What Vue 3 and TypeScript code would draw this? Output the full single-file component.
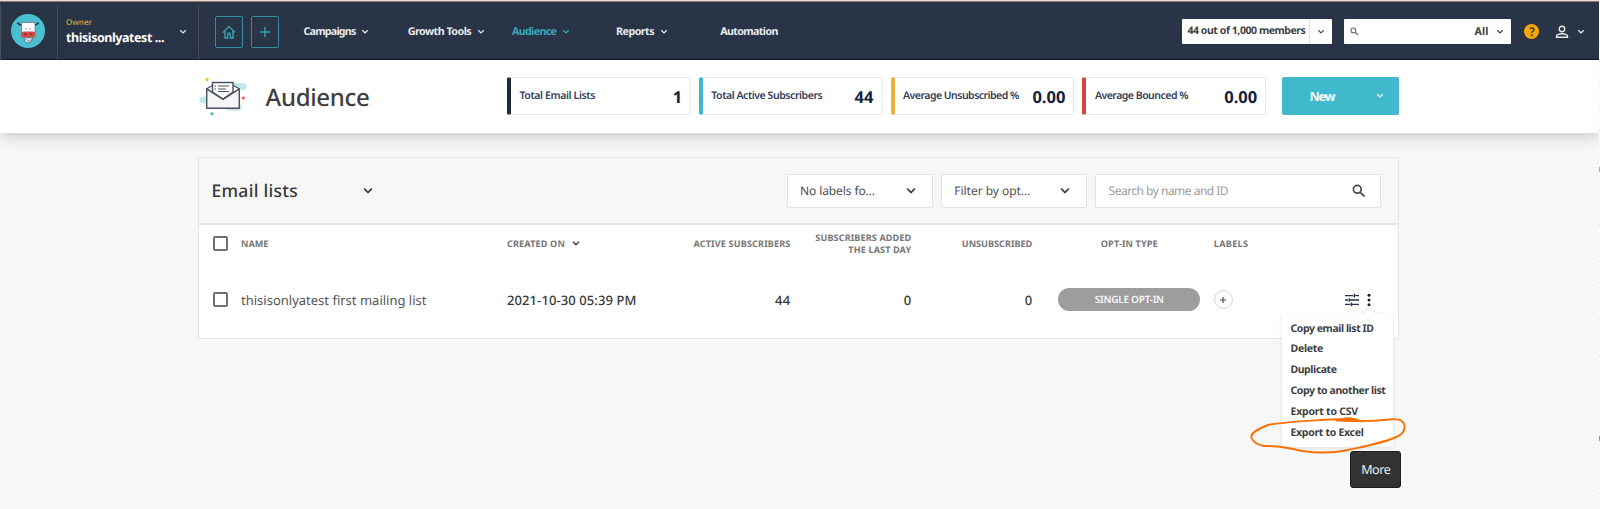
<script setup lang="ts">
import type { Directive } from 'vue'

// Tracks the text so that it fills the given width in pixels.
const vFit: Directive<HTMLElement, number> = {
  mounted(el, binding) {
    const natural = el.getBoundingClientRect().width
    const count = (el.textContent ?? '').trim().length
    el.style.letterSpacing = `${(binding.value - natural) / count}px`
  },
}

interface NavItem { label: string; width: number; active?: boolean; menu: boolean }
const nav: NavItem[] = [
  { label: 'Campaigns', width: 52, menu: true },
  { label: 'Growth Tools', width: 63.5, menu: true },
  { label: 'Audience', width: 44.5, menu: true, active: true },
  { label: 'Reports', width: 38, menu: true },
  { label: 'Automation', width: 57.5, menu: false },
]

const stats = [
  { label: 'Total Email Lists', width: 75.5, value: '1', valueWidth: 9, tone: 'navy' },
  { label: 'Total Active Subscribers', width: 111, value: '44', valueWidth: 19, tone: 'teal' },
  { label: 'Average Unsubscribed %', width: 115.5, value: '0.00', valueWidth: 33, tone: 'amber' },
  { label: 'Average Bounced %', width: 93, value: '0.00', valueWidth: 33, tone: 'red' },
]

const actions = [
  { label: 'Copy email list ID', width: 83 },
  { label: 'Delete', width: 32.5 },
  { label: 'Duplicate', width: 46 },
  { label: 'Copy to another list', width: 95 },
  { label: 'Export to CSV', width: 67.5 },
  { label: 'Export to Excel', width: 73 },
]

const ticks = [
  { y: 43, tone: 'grey' }, { y: 82, tone: 'grey' }, { y: 106, tone: 'grey' }, { y: 130, tone: 'grey' },
  { y: 167, tone: 'dark' }, { y: 224, tone: 'grey' }, { y: 261, tone: 'grey' }, { y: 282, tone: 'grey' },
  { y: 318, tone: 'grey' }, { y: 355, tone: 'grey' }, { y: 436, tone: 'blue' }, { y: 493, tone: 'grey' },
]
</script>

<template>
  <div class="page">
    <header class="topbar">
      <div class="brand">
        <svg width="36" height="36" viewBox="0 0 36 36">
          <circle cx="18" cy="18" r="17" fill="#4bbfd0" />
          <path d="M7.500 9.500c1 2.200 2.500 2.600 5 2.500M28.500 9.500c-1 2.200-2.500 2.600-5 2.500" fill="none" stroke="#293446" stroke-width="1.800" />
          <path d="M11.500 9.500h13.500v10h-13.500z" fill="#fff" stroke="#46566b" stroke-width=".6" />
          <path d="M15.500 15.800h1.700M19.300 15.800h1.700" stroke="#888" stroke-width="1" />
          <rect x="11" y="18.500" width="14.500" height="6" rx="2.800" fill="#d8493f" />
          <path d="M14 21.200h2.500M20 21.200h2.500" stroke="#8e2f35" stroke-width="1.400" />
          <path d="M14 24.700h9l-2 4-3 1.300-3-1.500z" fill="#dde8ef" stroke="#4d6072" stroke-width=".7" />
          <path d="M15.500 26l3 2 3-1.500" fill="none" stroke="#66798a" stroke-width=".7" />
        </svg>
      </div>
      <div class="account">
        <div class="account-text">
          <span v-fit="26" class="role">Owner</span>
          <span v-fit="98" class="account-name">thisisonlyatest ...</span>
        </div>
        <svg class="chev" width="8" height="6" viewBox="0 0 8 6"><path d="M1.300 1.300L4 3.900 6.700 1.300" /></svg>
      </div>
      <div class="quick">
        <div class="quick-btn">
          <svg width="14" height="14" viewBox="0 0 14 14"><path d="M1 7.500L7 1.500 13 7.500M3 6v7h2.700V9.500q0-1.500 1.300-1.500t1.300 1.500V13H11V6" /></svg>
        </div>
        <div class="quick-btn">
          <svg width="12" height="12" viewBox="0 0 12 12"><path d="M6 .7v10.600M.7 6h10.600" /></svg>
        </div>
      </div>
      <nav class="menu">
        <div v-for="item in nav" :key="item.label" class="menu-item" :class="{ active: item.active }">
          <span v-fit="item.width">{{ item.label }}</span>
          <svg v-if="item.menu" class="chev" width="8" height="6" viewBox="0 0 8 6"><path d="M1.300 1.300L4 3.900 6.700 1.300" /></svg>
        </div>
      </nav>
      <div class="members">
        <div class="members-label"><span v-fit="118">44 out of 1,000 members</span></div>
        <div class="members-toggle">
          <svg class="chev" width="8" height="6" viewBox="0 0 8 6"><path d="M1.300 1.300L4 3.900 6.700 1.300" /></svg>
        </div>
      </div>
      <div class="global-search">
        <svg class="lens" width="9" height="9" viewBox="0 0 9 9"><circle cx="3.400" cy="3.400" r="2.400" /><path d="M5.200 5.200L8 8" /></svg>
        <span v-fit="14" class="scope">All</span>
        <svg class="chev" width="8" height="6" viewBox="0 0 8 6"><path d="M1.300 1.300L4 3.900 6.700 1.300" /></svg>
      </div>
      <div class="help">?</div>
      <svg class="user" width="14" height="14" viewBox="0 0 14 14"><circle cx="7" cy="4" r="2.700" /><path d="M1.500 12.300v-1.400c0-1.200 3-2.200 5.500-2.200s5.500 1 5.500 2.200v1.400z" /></svg>
      <svg class="chev user-chev" width="8" height="6" viewBox="0 0 8 6"><path d="M1.300 1.300L4 3.900 6.700 1.300" /></svg>
    </header>

    <section class="hero">
      <svg class="hero-icon" width="50" height="40" viewBox="0 0 50 40">
        <path d="M34 9.500H45M5 23H12M31 30H40" stroke="#bfe8e8" stroke-width="7" stroke-linecap="round" />
        <path d="M8.500 12l5-3.500h22l6 3.500v19.500h-33z" fill="#f5f5f6" />
        <path d="M14.500 15V5.500H35V15L25 22z" fill="#fff" stroke="#4a5062" stroke-width="1.400" />
        <path d="M8.700 11.800L25 22.300 41.300 11.800V31.300H8.700z" fill="#f5f5f6" stroke="#4a5062" stroke-width="1.400" stroke-linejoin="round" />
        <path d="M8.700 11.800l5.500-3.300M41.300 11.800l-6-3.300" stroke="#4a5062" stroke-width="1.200" />
        <path d="M16.500 9h1.500M20 9h11M16.500 12h1.500M20 12h8M20 14.500h11" stroke="#4a5062" stroke-width="1.100" />
        <circle cx="9" cy="2.500" r="1.600" fill="#fdbb12" />
        <circle cx="45.300" cy="21" r="1.500" fill="#f4534b" />
        <circle cx="14" cy="36.800" r="1.600" fill="#3fb8cc" />
      </svg>
      <h1><span v-fit="104">Audience</span></h1>
      <div class="stats">
        <div v-for="s in stats" :key="s.label" class="stat" :class="s.tone">
          <span v-fit="s.width" class="stat-label">{{ s.label }}</span>
          <span v-fit="s.valueWidth" class="stat-value">{{ s.value }}</span>
        </div>
      </div>
      <div class="new-btn">
        <span v-fit="25">New</span>
        <svg class="chev" width="8" height="6" viewBox="0 0 8 6"><path d="M1.300 1.300L4 3.900 6.700 1.300" /></svg>
      </div>
    </section>

    <main class="panel">
      <div class="panel-head">
        <h2><span v-fit="86.500">Email lists</span></h2>
        <svg class="chev-lg" width="10" height="8" viewBox="0 0 10 8"><path d="M1.200 1.700L5 5.500 8.800 1.700" /></svg>
        <div class="select first">
          <span v-fit="75">No labels fo…</span>
          <svg class="chev-lg" width="10" height="8" viewBox="0 0 10 8"><path d="M1.200 1.700L5 5.500 8.800 1.700" /></svg>
        </div>
        <div class="select">
          <span v-fit="76">Filter by opt…</span>
          <svg class="chev-lg" width="10" height="8" viewBox="0 0 10 8"><path d="M1.200 1.700L5 5.500 8.800 1.700" /></svg>
        </div>
        <div class="search">
          <span v-fit="119.500">Search by name and ID</span>
          <svg width="14" height="14" viewBox="0 0 14 14"><circle cx="5.300" cy="5.300" r="3.900" /><path d="M8.300 8.300L12.700 12.700" /></svg>
        </div>
      </div>

      <div class="row head">
        <span class="box" />
        <div><span v-fit="27.500">NAME</span></div>
        <div class="created">
          <span v-fit="58">CREATED ON</span>
          <svg class="chev-lg" width="8" height="7" viewBox="0 0 10 8"><path d="M1.200 1.700L5 5.500 8.800 1.700" /></svg>
        </div>
        <div class="num"><span v-fit="97">ACTIVE SUBSCRIBERS</span></div>
        <div class="num two"><span v-fit="96">SUBSCRIBERS ADDED</span><span v-fit="63">THE LAST DAY</span></div>
        <div class="num"><span v-fit="70.500">UNSUBSCRIBED</span></div>
        <div class="mid"><span v-fit="57">OPT-IN TYPE</span></div>
        <div class="tag"><span v-fit="34.500">LABELS</span></div>
        <div />
      </div>

      <div class="row item">
        <span class="box" />
        <div class="list-name"><span v-fit="185.500">thisisonlyatest first mailing list</span></div>
        <div><span v-fit="129.500">2021-10-30 05:39 PM</span></div>
        <div class="num"><span v-fit="15.500">44</span></div>
        <div class="num"><span v-fit="7.500">0</span></div>
        <div class="num"><span v-fit="7.500">0</span></div>
        <div class="mid"><div class="pill"><span v-fit="69">SINGLE OPT-IN</span></div></div>
        <div class="tag">
          <div class="add"><svg width="6" height="6" viewBox="0 0 6 6"><path d="M3 0v6M0 3h6" /></svg></div>
        </div>
        <div class="tools">
          <svg width="14" height="14" viewBox="0 0 14 14">
            <path d="M0 2.600h8M10 2.600h4M9.300 .8v3.600M0 7h3M4.300 5.200v3.600M5 7h9M0 11.400h5.500M6.500 9.600v3.600M7 11.400h7" stroke="#293446" stroke-width="1.400" />
          </svg>
          <div class="kebab">
            <svg width="4" height="14" viewBox="0 0 4 14" fill="#101c30"><circle cx="2" cy="2.300" r="1.500" /><circle cx="2" cy="7" r="1.500" /><circle cx="2" cy="11.700" r="1.500" /></svg>
            <div class="dropdown">
              <div v-for="a in actions" :key="a.label" class="action"><span v-fit="a.width">{{ a.label }}</span></div>
            </div>
            <div class="tooltip"><span v-fit="29">More</span></div>
            <svg class="scribble" width="164" height="46" viewBox="1246 412 164 46">
              <path d="M1363 421.500C1348 418 1338 419 1322 420C1304 421 1284 422 1268 425C1258 429 1250 433 1251.500 438C1253 442 1257 444.500 1264 446C1278 445.500 1290 448 1302 451C1316 453 1334 453 1348 450C1366 446 1382 443 1394 438C1402 435 1406 430 1404 424C1402 419 1396 419 1389 419.500C1376 421 1362 422 1338 420.500C1344 417 1352 418 1358 420" />
            </svg>
          </div>
        </div>
      </div>
    </main>

    <aside class="edge">
      <i v-for="t in ticks" :key="t.y" :class="t.tone" :style="{ top: t.y + 'px' }" />
    </aside>
  </div>
</template>

<style>
html, body { margin: 0; background: #f7f7f7; }
</style>

<style scoped>
* { box-sizing: border-box; }
.page {
  position: relative;
  width: 1600px;
  height: 509px;
  overflow: hidden;
  background: #f7f7f7;
  font-family: "Noto Sans", "Open Sans", sans-serif;
  font-size: 11px;
  color: #424242;
  text-rendering: geometricPrecision;
}
svg { display: block; flex: none; }
span { white-space: nowrap; }
.chev path, .chev-lg path { fill: none; stroke: currentColor; stroke-width: 1.3; }
.chev-lg path { stroke-width: 1.7; }

.topbar {
  width: 1599px;
  height: 60px;
  display: flex;
  align-items: center;
  padding-top: 3px;
  background: #293446;
  border-top: 1px solid #eed9ce;
  border-bottom: 1px solid #0d1d3b;
  color: #e9ebee;
  box-shadow: inset 0 1px #8a7775;
}
.brand {
  width: 58px;
  height: 56px;
  padding: 9px 0 0 9px;
  border-left: 1px solid #454d5b;
  border-right: 1px solid #424750;
}
.account {
  width: 141px;
  height: 56px;
  display: flex;
  align-items: center;
  padding-left: 8px;
  border-right: 1px solid #424750;
}
.account-text { width: 113px; display: flex; flex-direction: column; align-items: flex-start; }
.role { font-size: 8px; line-height: 11px; font-weight: 600; color: #c69a3e; }
.account-name { font-size: 12.5px; line-height: 19px; font-weight: 700; color: #fff; }
.quick { display: flex; gap: 8px; margin-left: 16px; }
.quick-btn {
  width: 28px;
  height: 32px;
  display: flex;
  align-items: center;
  justify-content: center;
  border: 1px solid #318d9d;
  border-radius: 2px;
}
.quick-btn path { fill: none; stroke: #36a3b5; stroke-width: 1.4; }
.menu { display: grid; grid-template-columns: repeat(5, 104.2px); margin-left: 24.500px; }
.menu-item { display: flex; align-items: center; gap: 5.500px; font-size: 10.7px; font-weight: 700; }
.active { color: #38a9ba; }
.members {
  width: 150px;
  height: 25px;
  display: flex;
  margin-left: 357.500px;
  background: #fff;
  border-radius: 1px;
  color: #424242;
  font-size: 10.5px;
  font-weight: 700;
}
.members-label { width: 128px; padding-left: 5.500px; line-height: 25px; border-right: 1px solid #e2e2e2; }
.members-toggle { flex: 1; display: flex; align-items: center; justify-content: center; color: #555; }
.global-search {
  width: 167px;
  height: 25px;
  display: flex;
  align-items: center;
  margin-left: 12px;
  padding: 0 6.500px 0 6px;
  background: #fff;
  border-radius: 1px;
  color: #424242;
}
.lens { fill: none; stroke: #666; stroke-width: 1.1; }
.scope { margin-left: auto; margin-right: 8px; font-size: 10.7px; font-weight: 700; }
.help {
  width: 15px;
  height: 15px;
  margin-left: 13.5px;
  border-radius: 50%;
  background: #fca503;
  color: #293446;
  font-size: 12px;
  line-height: 15px;
  font-weight: 600;
  text-align: center;
}
.user { margin-left: 15.500px; fill: none; stroke: #e9ebee; stroke-width: 1.4; }
.user-chev { margin-left: 8px; }

.hero {
  width: 1599px;
  height: 72.500px;
  display: flex;
  align-items: center;
  padding-left: 198px;
  background: #fff;
  box-shadow: 0 2px 16px rgba(0, 0, 0, .22);
}
.hero-icon { margin-top: 2px; }
h1 { width: 259px; margin: 3px 0 0; padding-left: 17.500px; font-size: 24px; line-height: 30px; font-weight: 500; color: #3f3f3f; }
.stats { display: flex; gap: 8px; }
.stat {
  width: 183.8px;
  height: 38px;
  display: flex;
  align-items: center;
  justify-content: space-between;
  padding: 0 8px 0 8.5px;
  border: 1px solid #e8e8e8;
  border-left: 4px solid;
  border-radius: 2px;
  color: #33405a;
}
.stat-label { font-size: 10.5px; font-weight: 600; }
.stat-value { font-size: 16.5px; font-weight: 700; color: #14213c; }
.navy { border-left-color: #1d2942; }
.teal { border-left-color: #3fb8ca; }
.amber { border-left-color: #ecb13a; }
.red { border-left-color: #d6433c; }
.new-btn {
  width: 117px;
  height: 38px;
  display: flex;
  align-items: center;
  justify-content: space-between;
  margin-left: 15.800px;
  padding: 0 15px 0 27.500px;
  background: #40b9cc;
  border-radius: 2px;
  color: #fff;
  font-size: 12.500px;
  font-weight: 700;
}

.panel {
  width: 1201px;
  height: 181.500px;
  margin: 24.500px 0 0 198px;
  background: #fff;
  border: 1px solid #e6e6e6;
}
.panel-head {
  height: 67px;
  display: flex;
  align-items: center;
  padding-left: 12.500px;
  background: #f7f7f7;
  border-bottom: 2px solid #e4e4e4;
}
h2 { width: 151px; margin: 1px 0 0; font-size: 17.500px; line-height: 24px; font-weight: 500; color: #383838; }
.panel-head .chev-lg { color: #3b3b3b; }
.select {
  width: 146px;
  height: 34px;
  display: flex;
  align-items: center;
  justify-content: space-between;
  margin-right: 8.300px;
  padding: 0 16px 0 12.500px;
  background: #fff;
  border: 1px solid #e3e3e3;
  border-radius: 2px;
  color: #4f4f4f;
  font-size: 12px;
}
.first { margin-left: 414px; }
.search {
  width: 286px;
  height: 34px;
  display: flex;
  align-items: center;
  justify-content: space-between;
  padding: 0 14px 0 12.500px;
  background: #fff;
  border: 1px solid #e3e3e3;
  border-radius: 2px;
  color: #9b9b9b;
  font-size: 12px;
}
.search svg { fill: none; stroke: #4a4a4a; stroke-width: 1.7; }
.row {
  display: grid;
  grid-template-columns: 28px 266px 173.500px 110px 120.800px 121px 169px 130px 1fr;
  align-items: center;
  padding-left: 14px;
}
.head { height: 37px; font-size: 9.100px; font-weight: 700; color: #777; }
.item { height: 75px; font-size: 13px; font-weight: 500; color: #383838; }
.list-name { font-weight: 400; color: #545454; }
.box { width: 15px; height: 15px; border: 2px solid #717171; border-radius: 2px; background: #fff; }
.created { display: flex; align-items: center; gap: 7px; }
.created .chev-lg { color: #383838; }
.num { display: flex; justify-content: flex-end; }
.two { flex-direction: column; align-items: flex-end; line-height: 11.500px; }
.mid { display: flex; justify-content: center; padding-left: 26px; padding-right: 1px; }
.tag { padding-left: 12.500px; }
.pill {
  width: 142px;
  height: 23px;
  border-radius: 12px;
  background: #9d9d9d;
  color: #f7f7f7;
  font-size: 10px;
  font-weight: 600;
  line-height: 23px;
  text-align: center;
}
.add {
  width: 19px;
  height: 19px;
  display: flex;
  align-items: center;
  justify-content: center;
  border: 1px solid #d6d6d6;
  border-radius: 50%;
}
.add path { stroke: #4a4a4a; stroke-width: 1.200; }
.tools { display: flex; align-items: center; gap: 8.500px; padding-left: 13.700px; }
.kebab { position: relative; }
.dropdown {
  position: absolute;
  top: 20px;
  left: -85.500px;
  width: 111px;
  height: 134px;
  padding: 6px 0 0 8.500px;
  background: #fff;
  box-shadow: 0 1px 4px rgba(0, 0, 0, .1);
  color: #3f3f3f;
  font-size: 10.500px;
  font-weight: 700;
}
.dropdown::before {
  content: "";
  position: absolute;
  top: -5px;
  left: 82px;
  width: 10px;
  height: 10px;
  background: #fff;
  border: solid #e9e9e9;
  border-width: 1px 0 0 1px;
  transform: rotate(45deg);
}
.action { position: relative; height: 20.900px; line-height: 20.900px; }
.tooltip {
  position: absolute;
  top: 158px;
  left: -17.500px;
  width: 51.500px;
  height: 37px;
  background: #323232;
  border: 1px solid #1e1e1e;
  border-radius: 3px;
  color: #ededed;
  font-size: 12.500px;
  font-weight: 400;
  line-height: 35px;
  text-align: center;
}
.scribble { position: absolute; top: 119px; left: -121.500px; fill: none; stroke: #fb7106; stroke-width: 1.900; stroke-linecap: round; }
.edge { position: absolute; top: 0; right: 0; width: 1px; height: 509px; background: #fbfbfb; }
.edge i { position: absolute; left: 0; width: 1px; height: 1px; background: #d5d5d5; }
.edge .dark { height: 5px; background: #aaa; }
.edge .blue { height: 5px; background: #719ae8; }
</style>
